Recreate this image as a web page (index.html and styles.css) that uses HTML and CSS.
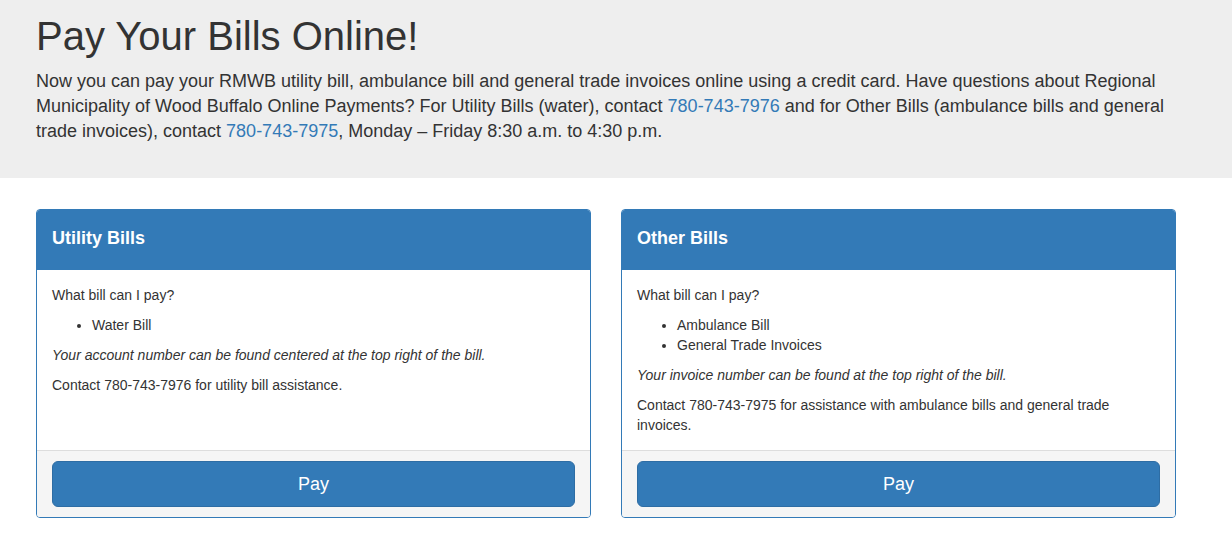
FILE: index.html
```html
<!DOCTYPE html>
<html>
<head lang="en">
  <meta charset="UTF-8">
  <title>Pay Your Bills Online</title>
  <link rel="stylesheet" href="styles.css">
</head>
<body>
<div class="jumbotron">
  <div class="container">
    <h1>Pay Your Bills Online!</h1>
    <p>Now you can pay your RMWB utility bill, ambulance bill and general trade invoices online using a credit card. Have questions about Regional Municipality of Wood Buffalo Online Payments? For Utility Bills (water), contact <a href="#">780-743-7976</a> and for Other Bills (ambulance bills and general trade invoices), contact <a href="#">780-743-7975</a>, Monday &ndash; Friday 8:30 a.m. to 4:30 p.m.</p>
  </div>
</div>

<div class="container">
  <div class="panels">
    <div class="panel">
      <div class="panel-heading">Utility Bills</div>
      <div class="panel-body">
        <p>What bill can I pay?</p>
        <ul>
          <li>Water Bill</li>
        </ul>
        <p><em>Your account number can be found centered at the top right of the bill.</em></p>
        <p>Contact 780-743-7976 for utility bill assistance.</p>
      </div>
      <div class="panel-footer">
        <a href="#" class="btn">Pay</a>
      </div>
    </div>

    <div class="panel">
      <div class="panel-heading">Other Bills</div>
      <div class="panel-body">
        <p>What bill can I pay?</p>
        <ul>
          <li>Ambulance Bill</li>
          <li>General Trade Invoices</li>
        </ul>
        <p><em>Your invoice number can be found at the top right of the bill.</em></p>
        <p>Contact 780-743-7975 for assistance with ambulance bills and general trade invoices.</p>
      </div>
      <div class="panel-footer">
        <a href="#" class="btn">Pay</a>
      </div>
    </div>
  </div>
</div>
</body>
</html>
```

FILE: styles.css
```css
* {
  margin: 0;
  padding: 0;
  box-sizing: border-box;
}

body {
  font-family: "Liberation Sans", Arial, sans-serif;
  font-size: 14px;
  line-height: 20px;
  color: #333;
  background-color: #fff;
}

a {
  color: #337ab7;
  text-decoration: none;
}

.container {
  width: 1176px;
  padding-left: 36px;
}

/* top banner */
.jumbotron {
  background-color: #eee;
  padding: 14px 0 34px;
}

.jumbotron h1 {
  font-size: 40px;
  font-weight: normal;
  line-height: 44px;
}

.jumbotron p {
  margin-top: 11px;
  font-size: 18px;
  line-height: 25px;
}

/* bill panels */
.panels {
  display: flex;
  gap: 30px;
  margin-top: 31px;
}

.panel {
  flex: 1;
  display: flex;
  flex-direction: column;
  border: 1px solid #337ab7;
  border-radius: 4px;
  overflow: hidden;
}

.panel-heading {
  background-color: #337ab7;
  border-bottom: 1px solid #337ab7;
  color: #fff;
  font-size: 18px;
  font-weight: bold;
  line-height: 20px;
  padding: 18px 15px 21px;
}

.panel-body {
  flex: 1;
  padding: 15px;
}

.panel-body p,
.panel-body ul {
  margin-bottom: 10px;
}

.panel-body p:last-child {
  margin-bottom: 0;
}

.panel-body ul {
  padding-left: 40px;
}

.panel-footer {
  background-color: #f5f5f5;
  border-top: 1px solid #ddd;
  padding: 10px 15px;
}

.btn {
  display: block;
  background-color: #337ab7;
  border: 1px solid #2e6da4;
  border-radius: 6px;
  color: #fff;
  font-size: 18px;
  line-height: 24px;
  padding: 10px 16px;
  text-align: center;
}
```
